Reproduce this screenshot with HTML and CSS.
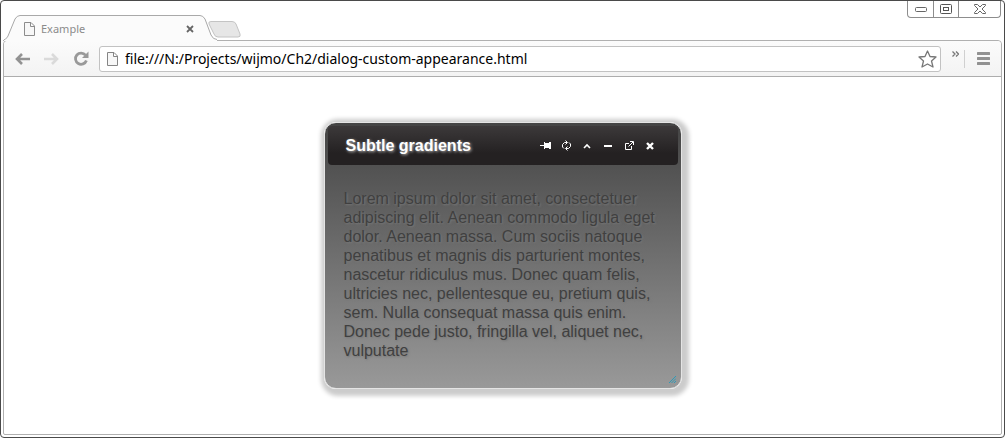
FILE: index.html
```html
<!DOCTYPE html>
<html lang="en">
<head>
<meta charset="utf-8">
<title>Example</title>
<link rel="stylesheet" href="styles.css">
</head>
<body>
<div class="window">
  <header class="titlebar">
    <div class="tabs">
      <div class="tab">
        <svg class="tab-shape" width="214" height="26" viewBox="0 0 214 26" aria-hidden="true">
          <path d="M0 26C1 24 4 24 5 21L12 4Q14 .5 17 .5H197Q200 .5 202 4L208 20Q210 24.500 214 24.500V26Z" fill="#fbfbfb"/>
          <path d="M0 26C1 24 4 24 5 21L12 4Q14 .5 17 .5H197Q200 .5 202 4L208 20Q210 24.500 214 24.500" fill="none" stroke="#a9a9a9"/>
        </svg>
        <div class="tab-content">
          <svg width="11" height="14" viewBox="0 0 11 14" aria-hidden="true"><path d="M.5.5H7L10.500 4V13.500H.5ZM6.500.5V4.500H10.500" fill="#f7f7f7" stroke="#8c8c8c"/></svg>
          <span class="tab-title">Example</span>
          <button class="plain" type="button" aria-label="Close tab"><svg width="8" height="8" viewBox="0 0 8 8"><path d="M1 1L7 7M7 1L1 7" stroke="#666" stroke-width="1.800"/></svg></button>
        </div>
      </div>
      <button class="plain new-tab" type="button" aria-label="New tab"><svg width="33" height="17" viewBox="0 0 33 17"><path d="M3 .5H24Q27 .5 28 3L32 13Q33 16 30 16H10Q7 16 6 13L1 3Q0 .5 3 .5Z" fill="#e6e6e6" stroke="#c4c4c4"/></svg></button>
    </div>
    <div class="controls">
      <button class="plain" type="button" aria-label="Minimize"><svg width="12" height="5" viewBox="0 0 12 5"><rect x=".5" y=".5" width="11" height="4" rx="1" fill="#fff" stroke="#666"/></svg></button>
      <button class="plain" type="button" aria-label="Maximize"><svg width="12" height="10" viewBox="0 0 12 10"><rect x=".5" y=".5" width="11" height="9" rx="1" fill="#fff" stroke="#555"/><rect x="3.500" y="3.500" width="5" height="3" fill="#fff" stroke="#555"/></svg></button>
      <button class="plain wide" type="button" aria-label="Close"><svg width="12" height="10" viewBox="0 0 12 10"><path d="M.5.5H3.500L6 3L8.500.5H11.500V1.500L8 5L11.500 8.500V9.500H8.500L6 7L3.500 9.500H.5V8.500L4 5L.5 1.500Z" fill="#fff" stroke="#666"/></svg></button>
    </div>
  </header>
  <div class="frame">
    <nav class="toolbar">
      <button class="plain" type="button" aria-label="Back"><svg width="15" height="12" viewBox="0 0 15 12"><path d="M7 1L2 6L7 11M2 6H15" fill="none" stroke="#929292" stroke-width="2.600"/></svg></button>
      <button class="plain" type="button" aria-label="Forward"><svg width="15" height="12" viewBox="0 0 15 12"><path d="M8 1L13 6L8 11M13 6H0" fill="none" stroke="#dadada" stroke-width="2.600"/></svg></button>
      <button class="plain" type="button" aria-label="Reload"><svg width="16" height="16" viewBox="0 0 16 16"><path d="M12.500 4.200A5.600 5.600 0 1 0 13.400 9.500" fill="none" stroke="#999" stroke-width="2.800"/><path d="M15.500.5V7H9Z" fill="#999"/></svg></button>
      <div class="address">
        <svg width="11" height="14" viewBox="0 0 11 14" aria-hidden="true"><path d="M.5.5H7L10.500 4V13.500H.5ZM6.500.5V4.500H10.500" fill="#f7f7f7" stroke="#858585"/></svg>
        <input class="url" type="text" aria-label="Address" value="file:///N:/Projects/wijmo/Ch2/dialog-custom-appearance.html">
        <button class="plain" type="button" aria-label="Bookmark"><svg width="19" height="18" viewBox="0 0 19 18"><path d="M9.500 1L12 6.500L18 7L13.500 11L15 17L9.500 14L4 17L5.500 11L1 7L7 6.500Z" fill="#fff" stroke="#777" stroke-width="1.300" stroke-linejoin="round"/></svg></button>
      </div>
      <button class="plain more" type="button" aria-label="More extensions"><svg width="7" height="6" viewBox="0 0 7 6"><path d="M.5.5L3 3L.5 5.500M4 .5L6.500 3L4 5.500" fill="none" stroke="#777" stroke-width="1.300"/></svg></button>
      <button class="plain menu" type="button" aria-label="Menu"><svg width="13" height="13" viewBox="0 0 13 13"><path d="M1 1.500H12M1 6.500H12M1 11.500H12" stroke="#919191" stroke-width="3" stroke-linecap="round"/></svg></button>
    </nav>
    <main class="page">
      <section class="dialog" role="dialog" aria-labelledby="dialog-title">
        <header class="dialog-head">
          <h1 class="dialog-title" id="dialog-title">Subtle gradients</h1>
          <div class="dialog-actions">
            <button class="plain" type="button" aria-label="Pin"><svg width="11" height="9" viewBox="0 0 11 9"><path d="M0 4H4V5H0ZM4 1H5V2H9V1H11V8H9V7H5V8H4Z" fill="#fff"/></svg></button>
            <button class="plain" type="button" aria-label="Refresh"><svg width="11" height="11" viewBox="0 0 11 11"><path d="M6 2.500H3.500L1.500 4.500V7L3 8.500M4.500.5L6.500 2.500L4.500 4.500M5 8.500H7.500L9.500 6.500V4L8 2.500M6.500 6.500L4.500 8.500L6.500 10.500" fill="none" stroke="#fff"/></svg></button>
            <button class="plain" type="button" aria-label="Collapse"><svg width="8" height="6" viewBox="0 0 8 6"><path d="M1 5L4 2L7 5" fill="none" stroke="#fff" stroke-width="1.600"/></svg></button>
            <button class="plain" type="button" aria-label="Minimize dialog"><svg width="8" height="2" viewBox="0 0 8 2"><path d="M0 0H8V2H0Z" fill="#fff"/></svg></button>
            <button class="plain" type="button" aria-label="Maximize dialog"><svg width="9" height="9" viewBox="0 0 9 9"><path d="M4 2.500H.5V8.500H6.500V5M3.500 5.500L8 1M5 .5H8.500V4" fill="none" stroke="#fff"/></svg></button>
            <button class="plain" type="button" aria-label="Close dialog"><svg width="8" height="8" viewBox="0 0 8 8"><path d="M1 1L7 7M7 1L1 7" stroke="#fff" stroke-width="2.400"/></svg></button>
          </div>
        </header>
        <p class="dialog-text">Lorem ipsum dolor sit amet, consectetuer adipiscing elit. Aenean commodo ligula eget dolor. Aenean massa. Cum sociis natoque penatibus et magnis dis parturient montes, nascetur ridiculus mus. Donec quam felis, ultricies nec, pellentesque eu, pretium quis, sem. Nulla consequat massa quis enim. Donec pede justo, fringilla vel, aliquet nec, vulputate</p>
        <svg class="grip" width="7" height="7" viewBox="0 0 7 7" aria-hidden="true"><path d="M0 7L7 0M2.500 7L7 2.500M5 7L7 5" stroke="#2d9ab8"/></svg>
      </section>
    </main>
  </div>
</div>
</body>
</html>
```
FILE: styles.css
```css
* { box-sizing: border-box; }

body {
  margin: 0;
  background: #fff;
  font-family: "Liberation Sans", Arial, sans-serif;
}

.plain {
  display: flex;
  align-items: center;
  justify-content: center;
  padding: 0;
  border: 0;
  background: none;
}

.window {
  display: flex;
  flex-direction: column;
  min-height: 100vh;
  padding: 0 2px 2px;
  border: 1px solid #4a4a4a;
  border-radius: 4px;
}

.titlebar {
  display: flex;
  justify-content: space-between;
  height: 39px;
}

.tabs {
  display: flex;
  align-items: flex-end;
}

.tab {
  display: grid;
  width: 210px;
  margin-bottom: -1px;
  z-index: 1;
}

.tab-shape,
.tab-content { grid-area: 1 / 1; }

.tab-content {
  display: flex;
  align-items: center;
  padding: 2px 23px 0 21px;
}

.tab-title {
  flex: 1;
  padding-left: 6px;
  color: #8b8b8b;
  font: 11px/16px "Noto Sans", sans-serif;
}

.new-tab { margin: 0 0 2px -5px; z-index: 2; }

.controls {
  display: flex;
  height: 17px;
  margin-right: 1px;
  border: 1px solid #8d8d8d;
  border-top: 0;
  border-radius: 0 0 4px 4px;
}

.controls .plain { width: 25px; }
.controls .plain + .plain { border-left: 1px solid #8d8d8d; }
.controls .plain.wide { width: 42px; }

.frame {
  display: flex;
  flex: 1;
  flex-direction: column;
  border: 1px solid #b0b0b0;
  border-radius: 4px 4px 2px 2px;
}

.toolbar {
  display: flex;
  align-items: center;
  gap: 14px;
  height: 36px;
  padding: 0 11px;
  border-bottom: 1px solid #adadad;
  border-radius: 4px 4px 0 0;
  background: linear-gradient(#fbfbfb, #f3f3f3);
}

.address {
  display: flex;
  flex: 1;
  align-items: center;
  height: 26px;
  margin-left: -4px;
  padding: 0 3px 0 7px;
  border: 1px solid #c2c2c2;
  border-radius: 3px;
  background: #fff;
}

.url {
  flex: 1;
  min-width: 0;
  height: 22px;
  padding: 0 0 0 7px;
  border: 0;
  outline: 0;
  background: none;
  color: #000;
  font: 14px/20px "Noto Sans", sans-serif;
}

.more {
  width: 14px;
  height: 18px;
  margin-left: -4px;
  padding: 0 4px 10px 0;
  border-right: 1px solid #d0d0d0;
}

.menu { margin-left: -2px; }

.page {
  display: flex;
  flex: 1;
  align-items: flex-start;
  justify-content: center;
  padding: 45px 0 40px;
}

.dialog {
  display: flex;
  flex-direction: column;
  width: 358px;
  padding: 3px 3px 4px;
  border: 1px solid #e4e4e4;
  border-radius: 12px;
  background: linear-gradient(#444, #999);
  box-shadow: 2px 2px 4px 5px #ccc;
}

.dialog-head {
  display: flex;
  align-items: center;
  justify-content: space-between;
  height: 39px;
  padding: 0 17px 0 18px;
  border-radius: 4px;
  background: linear-gradient(#3c393a, #242122 70%);
}

.dialog-title {
  margin: 0;
  color: #fff;
  font-size: 16px;
  line-height: 20px;
  text-shadow: 1px 1px 3px #bbb;
}

.dialog-actions { display: flex; }
.dialog-actions .plain { width: 21px; height: 20px; }

.dialog-text {
  margin: 0;
  padding: 24px 16px 16px;
  color: #404040;
  font-size: 16px;
  line-height: 19px;
  text-shadow: 1px 1px 2px #777;
}

.grip {
  align-self: flex-end;
  margin: 0 2px 1px 0;
}
```
